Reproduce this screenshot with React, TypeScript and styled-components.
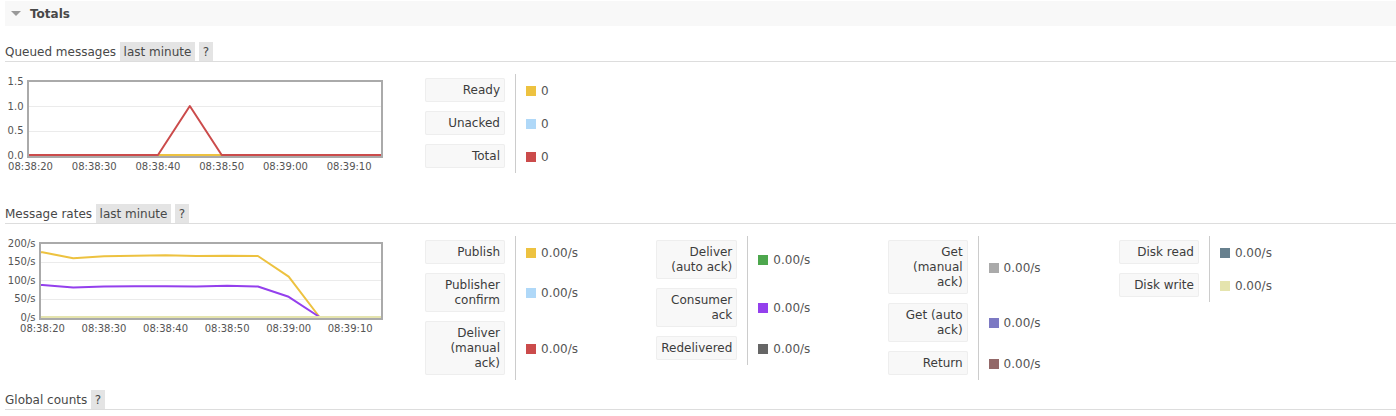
import React from 'react';
import styled, { createGlobalStyle } from 'styled-components';

const GlobalStyle = createGlobalStyle`
  html, body { margin: 0; padding: 0; background: #ffffff; }
  body {
    font-family: "DejaVu Sans", Verdana, sans-serif;
    font-size: 12px;
    color: #484848;
  }
`;

const Page = styled.div`
  padding: 1px 0 0 5px;
`;

const SectionHeader = styled.h2`
  margin: 0;
  height: 25px;
  background: #f8f8f8;
  display: flex;
  align-items: center;
  gap: 9px;
  padding-left: 6px;
  font-size: 12px;
  font-weight: bold;
  color: #484848;
`;

const Caret = styled.span`
  width: 0;
  height: 0;
  border-left: 5px solid transparent;
  border-right: 5px solid transparent;
  border-top: 5px solid #999;
`;

const SectionBody = styled.div`
  padding-top: 16px;
`;

const TitleBar = styled.h3`
  margin: 0;
  display: flex;
  align-items: stretch;
  gap: 3.5px;
  height: 19px;
  line-height: 20px;
  font-size: 12px;
  font-weight: normal;
  color: #484848;
  border-bottom: 1px solid #ddd;
`;

const TitleTag = styled.span`
  background: #e4e4e4;
  padding: 0 4px;
`;

const Row = styled.div`
  display: flex;
  align-items: flex-start;
  margin: 12px 0 10px;
`;

const ChartBox = styled.div`
  width: 420px;
  height: 120px;
  flex-shrink: 0;
`;

const Facts = styled.div`
  display: flex;
  align-items: flex-start;
`;

const FactGroup = styled.div`
  width: 231.3px;
  flex-shrink: 0;
  display: grid;
  grid-template-columns: auto 1fr;
  align-content: start;
`;

const LabelCell = styled.div`
  padding: 4px 10px 5px 0;
`;

const LabelBox = styled.div`
  background: #f8f8f8;
  box-shadow: inset 0 0 0 1px #eeeeee;
  border-radius: 2px;
  padding: 5px 5px 4px;
  line-height: 15px;
  text-align: right;
  color: #3c3c3c;
`;

const LabelText = styled.span`
  display: block;
  width: 70px;
  min-width: min-content;
  margin-left: auto;
`;

const ValueCell = styled.div`
  border-left: 1px solid #cccccc;
  padding-left: 10px;
  display: flex;
  align-items: center;
  gap: 5px;
  color: #555555;
`;

const Swatch = styled.span<{ $color: string }>`
  width: 10px;
  height: 10px;
  flex-shrink: 0;
  background: ${(p) => p.$color};
`;

type Series = { color: string; values: number[] };

interface ChartProps {
  plotLeft: number;
  yMax: number;
  yTicks: { v: number; label: string }[];
  series: Series[];
}

const TIMES = ['08:38:20', '08:38:30', '08:38:40', '08:38:50', '08:39:00', '08:39:10'];

const Chart: React.FC<ChartProps> = ({ plotLeft, yMax, yTicks, series }) => {
  const W = 380;
  const H = 120;
  const right = 377;
  const top = 7;
  const bottom = 83;
  const yZero = 81;
  const yTopVal = 7.5;
  const tmin = -0.24;
  const tmax = 55;
  const innerLeft = plotLeft + 1;
  const k = (376 - innerLeft) / (tmax - tmin);
  const x = (t: number) => innerLeft + (t - tmin) * k;
  const y = (v: number) => yZero - (v / yMax) * (yZero - yTopVal);

  const pathFor = (vals: number[]) => {
    const pts: [number, number][] = [[tmin, vals[0]]];
    vals.forEach((v, i) => pts.push([i * 5, v]));
    pts.push([tmax, vals[vals.length - 1]]);
    return pts.map((p, i) => `${i === 0 ? 'M' : 'L'}${x(p[0]).toFixed(2)},${y(p[1]).toFixed(2)}`).join(' ');
  };

  return (
    <svg width={W} height={H} viewBox={`0 0 ${W} ${H}`}>
      {yTicks
        .filter((t) => t.v > 0 && t.v < yMax)
        .map((t) => (
          <line
            key={`g${t.v}`}
            x1={plotLeft}
            x2={right}
            y1={Math.round(y(t.v)) + 0.5}
            y2={Math.round(y(t.v)) + 0.5}
            stroke="#ebebeb"
            strokeWidth={1}
          />
        ))}
      {series.map((s, i) => (
        <path key={i} d={pathFor(s.values)} fill="none" stroke={s.color} strokeWidth={2} strokeLinejoin="round" />
      ))}
      <rect
        x={plotLeft}
        y={top}
        width={right - plotLeft}
        height={bottom - top}
        fill="none"
        stroke="#aaaaaa"
        strokeWidth={2}
      />
      {yTicks.map((t) => (
        <text
          key={`y${t.v}`}
          x={plotLeft - 4.5}
          y={y(t.v)}
          textAnchor="end"
          dominantBaseline="central"
          fontFamily='"DejaVu Sans", Verdana, sans-serif'
          fontSize={10}
          fill="#545454"
        >
          {t.label}
        </text>
      ))}
      {TIMES.map((lbl, i) => (
        <text
          key={lbl}
          x={x(i * 10)}
          y={92}
          textAnchor="middle"
          dominantBaseline="central"
          fontFamily='"DejaVu Sans", Verdana, sans-serif'
          fontSize={10}
          fill="#545454"
        >
          {lbl}
        </text>
      ))}
    </svg>
  );
};

type Fact = { label: string; color: string; value: string };

const FactColumn: React.FC<{ rows: Fact[] }> = ({ rows }) => (
  <FactGroup>
    {rows.map((r) => (
      <React.Fragment key={r.label}>
        <LabelCell>
          <LabelBox>
            <LabelText>{r.label}</LabelText>
          </LabelBox>
        </LabelCell>
        <ValueCell>
          <Swatch $color={r.color} />
          <span>{r.value}</span>
        </ValueCell>
      </React.Fragment>
    ))}
  </FactGroup>
);

const zeros = Array(12).fill(0);

const queuedSeries: Series[] = [
  { color: '#afd8f8', values: zeros },
  { color: '#edc240', values: zeros },
  { color: '#cb4b4b', values: [0, 0, 0, 0, 0, 1, 0, 0, 0, 0, 0, 0] },
];

const rateSeries: Series[] = [
  { color: '#edc240', values: [176, 160, 165, 167, 168, 166, 167, 166, 110, 0, 0, 0] },
  { color: '#9440ed', values: [87, 80, 83, 84, 84, 83, 85, 83, 55, 0, 0, 0] },
  { color: '#e5e4ae', values: zeros },
];

const queuedFacts: Fact[][] = [
  [
    { label: 'Ready', color: '#edc240', value: '0' },
    { label: 'Unacked', color: '#afd8f8', value: '0' },
    { label: 'Total', color: '#cb4b4b', value: '0' },
  ],
];

const rateFacts: Fact[][] = [
  [
    { label: 'Publish', color: '#edc240', value: '0.00/s' },
    { label: 'Publisher confirm', color: '#afd8f8', value: '0.00/s' },
    { label: 'Deliver (manual ack)', color: '#cb4b4b', value: '0.00/s' },
  ],
  [
    { label: 'Deliver (auto ack)', color: '#4da74d', value: '0.00/s' },
    { label: 'Consumer ack', color: '#9440ed', value: '0.00/s' },
    { label: 'Redelivered', color: '#666666', value: '0.00/s' },
  ],
  [
    { label: 'Get (manual ack)', color: '#aaaaaa', value: '0.00/s' },
    { label: 'Get (auto ack)', color: '#7c79c3', value: '0.00/s' },
    { label: 'Return', color: '#936868', value: '0.00/s' },
  ],
  [
    { label: 'Disk read', color: '#67808e', value: '0.00/s' },
    { label: 'Disk write', color: '#e5e4ae', value: '0.00/s' },
  ],
];

export default function App() {
  return (
    <>
      <GlobalStyle />
      <Page>
        <SectionHeader>
          <Caret />
          Totals
        </SectionHeader>
        <SectionBody>
          <TitleBar>
            <span>Queued messages</span>
            <TitleTag>last minute</TitleTag>
            <TitleTag>?</TitleTag>
          </TitleBar>
          <Row>
            <ChartBox>
              <Chart
                plotLeft={23}
                yMax={1.5}
                yTicks={[
                  { v: 0, label: '0.0' },
                  { v: 0.5, label: '0.5' },
                  { v: 1, label: '1.0' },
                  { v: 1.5, label: '1.5' },
                ]}
                series={queuedSeries}
              />
            </ChartBox>
            <Facts>
              {queuedFacts.map((g, i) => (
                <FactColumn key={i} rows={g} />
              ))}
            </Facts>
          </Row>

          <TitleBar>
            <span>Message rates</span>
            <TitleTag>last minute</TitleTag>
            <TitleTag>?</TitleTag>
          </TitleBar>
          <Row>
            <ChartBox>
              <Chart
                plotLeft={35}
                yMax={200}
                yTicks={[
                  { v: 0, label: '0/s' },
                  { v: 50, label: '50/s' },
                  { v: 100, label: '100/s' },
                  { v: 150, label: '150/s' },
                  { v: 200, label: '200/s' },
                ]}
                series={rateSeries}
              />
            </ChartBox>
            <Facts>
              {rateFacts.map((g, i) => (
                <FactColumn key={i} rows={g} />
              ))}
            </Facts>
          </Row>

          <TitleBar>
            <span>Global counts</span>
            <TitleTag>?</TitleTag>
          </TitleBar>
        </SectionBody>
      </Page>
    </>
  );
}
